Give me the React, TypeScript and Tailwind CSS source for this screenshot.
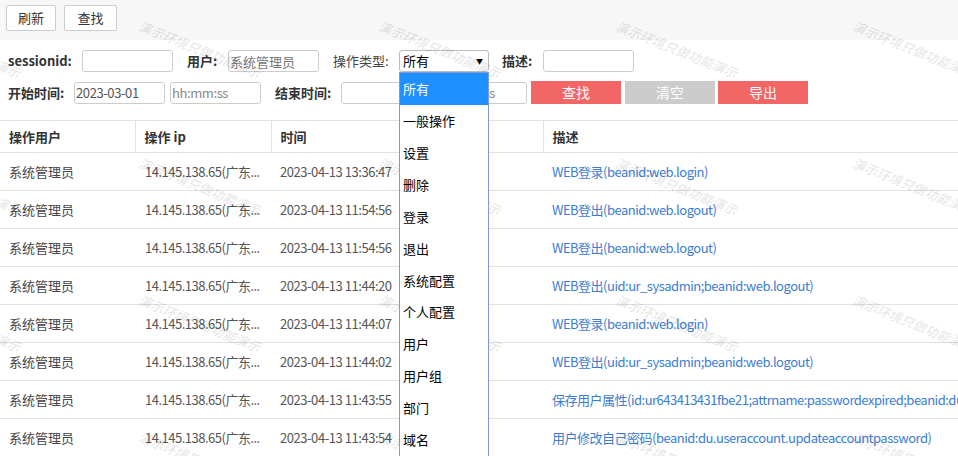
import React from 'react';

const rows = [
  { time: '2023-04-13 13:36:47', desc: 'WEB登录(beanid:web.login)' },
  { time: '2023-04-13 11:54:56', desc: 'WEB登出(beanid:web.logout)' },
  { time: '2023-04-13 11:54:56', desc: 'WEB登出(beanid:web.logout)' },
  { time: '2023-04-13 11:44:20', desc: 'WEB登出(uid:ur_sysadmin;beanid:web.logout)' },
  { time: '2023-04-13 11:44:07', desc: 'WEB登录(beanid:web.login)' },
  { time: '2023-04-13 11:44:02', desc: 'WEB登出(uid:ur_sysadmin;beanid:web.logout)' },
  { time: '2023-04-13 11:43:55', desc: '保存用户属性(id:ur643413431fbe21;attrname:passwordexpired;beanid:du.useraccount.save)' },
  { time: '2023-04-13 11:43:54', desc: '用户修改自己密码(beanid:du.useraccount.updateaccountpassword)' },
];

const options = ['所有', '一般操作', '设置', '删除', '登录', '退出', '系统配置', '个人配置', '用户', '用户组', '部门', '域名', '角色'];

const marks = [
  [-97, 16], [143, 16], [383, 16], [620, 16], [857, 16],
  [-97, 153], [143, 153], [383, 153], [620, 153], [857, 153],
  [-97, 290], [143, 290], [383, 290], [620, 290], [857, 290],
  [-97, 427], [143, 427], [383, 427], [620, 427], [857, 427],
];

const inputCls = 'h-[22px] border border-[#ccc] rounded-[3px] px-[1px] text-[13px] text-[#555] placeholder:text-[#888] outline-none bg-white';

export default function App() {
  return (
    <div
      className="relative w-[958px] h-[456px] overflow-hidden bg-white text-[13px] text-[#333]"
      style={{ fontFamily: '"Noto Sans CJK SC", "Noto Sans", sans-serif' }}
    >
      {/* toolbar */}
      <div className="h-[40px] bg-[#f7f7f7] flex items-start gap-[8px] pl-[6px] pt-[5px]">
        <button className="h-[26px] w-[50px] border border-[#ccc] bg-white rounded-[2px] text-[13px] text-[#333]">刷新</button>
        <button className="h-[26px] w-[53px] border border-[#ccc] bg-white rounded-[2px] text-[13px] text-[#333]">查找</button>
      </div>

      {/* filters */}
      <div className="pl-[8px] pt-[10px]">
        <div className="flex items-center h-[22px]">
          <span className="w-[74px] font-bold">sessionid:</span>
          <input className={`${inputCls} w-[91px]`} readOnly />
          <span className="ml-[14px] w-[41px] font-bold">用户:</span>
          <input className={`${inputCls} w-[91px] text-[#777]`} value="系统管理员" readOnly />
          <span className="ml-[14px] w-[66px] text-[#444]">操作类型:</span>
          <div className="w-[90px] h-[22px] border border-[#bbb] rounded-[3px] flex items-center justify-between pl-[3px] pr-[5px] text-black">
            <span>所有</span>
            <span className="text-[7px]">▼</span>
          </div>
          <span className="ml-[13px] w-[41px] font-bold">描述:</span>
          <input className={`${inputCls} w-[91px]`} readOnly />
        </div>
        <div className="flex items-center h-[23px] mt-[9px]">
          <span className="w-[66px] font-bold">开始时间:</span>
          <input className={`${inputCls} w-[91px] tracking-[-0.4px]`} value="2023-03-01" readOnly />
          <input className={`${inputCls} w-[91px] ml-[5px] tracking-[-0.4px]`} placeholder="hh:mm:ss" readOnly />
          <span className="ml-[14px] w-[66px] font-bold">结束时间:</span>
          <input className={`${inputCls} w-[91px]`} readOnly />
          <input className={`${inputCls} w-[90px] ml-[5px] tracking-[-0.4px]`} placeholder="hh:mm:ss" readOnly />
          <button className="ml-[4px] w-[90px] h-[23px] bg-[#f26666] text-white text-[14px]">查找</button>
          <button className="ml-[4px] w-[90px] h-[23px] bg-[#cccccc] text-white text-[14px]">清空</button>
          <button className="ml-[3px] w-[90px] h-[23px] bg-[#f26666] text-white text-[14px]">导出</button>
        </div>
      </div>

      {/* table */}
      <table className="mt-[16px] w-full border-collapse table-fixed text-left">
        <colgroup>
          <col className="w-[135px]" />
          <col className="w-[136px]" />
          <col className="w-[137px]" />
          <col className="w-[135px]" />
          <col />
        </colgroup>
        <thead>
          <tr className="h-[32px] border-y border-[#dde4e4]">
            <th className="pl-[9px] font-bold border-r border-[#dde4e4]">操作用户</th>
            <th className="pl-[9px] font-bold border-r border-[#dde4e4]">操作 ip</th>
            <th className="pl-[9px] font-bold border-r border-[#dde4e4]">时间</th>
            <th className="pl-[9px] font-bold border-r border-[#dde4e4]">操作类型</th>
            <th className="pl-[9px] font-bold">描述</th>
          </tr>
        </thead>
        <tbody>
          {rows.map((r, i) => (
            <tr key={i} className="h-[38px] border-b border-[#dde4e4]">
              <td className="pl-[9px] text-[#444] whitespace-nowrap">系统管理员</td>
              <td className="pl-[10px] text-[#555] whitespace-nowrap tracking-[-0.5px]">14.145.138.65(广东...</td>
              <td className="pl-[9px] text-[#555] whitespace-nowrap tracking-[-0.45px]">{r.time}</td>
              <td className="pl-[9px] text-[#555] whitespace-nowrap">一般操作</td>
              <td className="pl-[9px] text-[#3c7dd3] whitespace-nowrap overflow-hidden tracking-[-0.5px]">{r.desc}</td>
            </tr>
          ))}
        </tbody>
      </table>

      {/* watermark */}
      <div className="absolute inset-0 pointer-events-none">
        {marks.map(([x, y], i) => (
          <span
            key={i}
            className="absolute origin-top-left rotate-[22deg] whitespace-nowrap text-[13px] font-bold italic text-black/[0.09]"
            style={{ left: x, top: y }}
          >
            演示环境只做功能演示
          </span>
        ))}
      </div>

      {/* open select list */}
      <div className="absolute left-[399px] top-[72px] w-[90px] h-[400px] bg-white border border-[#7d9ad8] z-10">
        {options.map((o, i) => (
          <div
            key={o}
            className={`h-[31.9px] flex items-center pl-[3px] text-[13px] ${i === 0 ? 'bg-[#1e90ff] text-white' : 'text-black'}`}
          >
            {o}
          </div>
        ))}
      </div>
    </div>
  );
}
